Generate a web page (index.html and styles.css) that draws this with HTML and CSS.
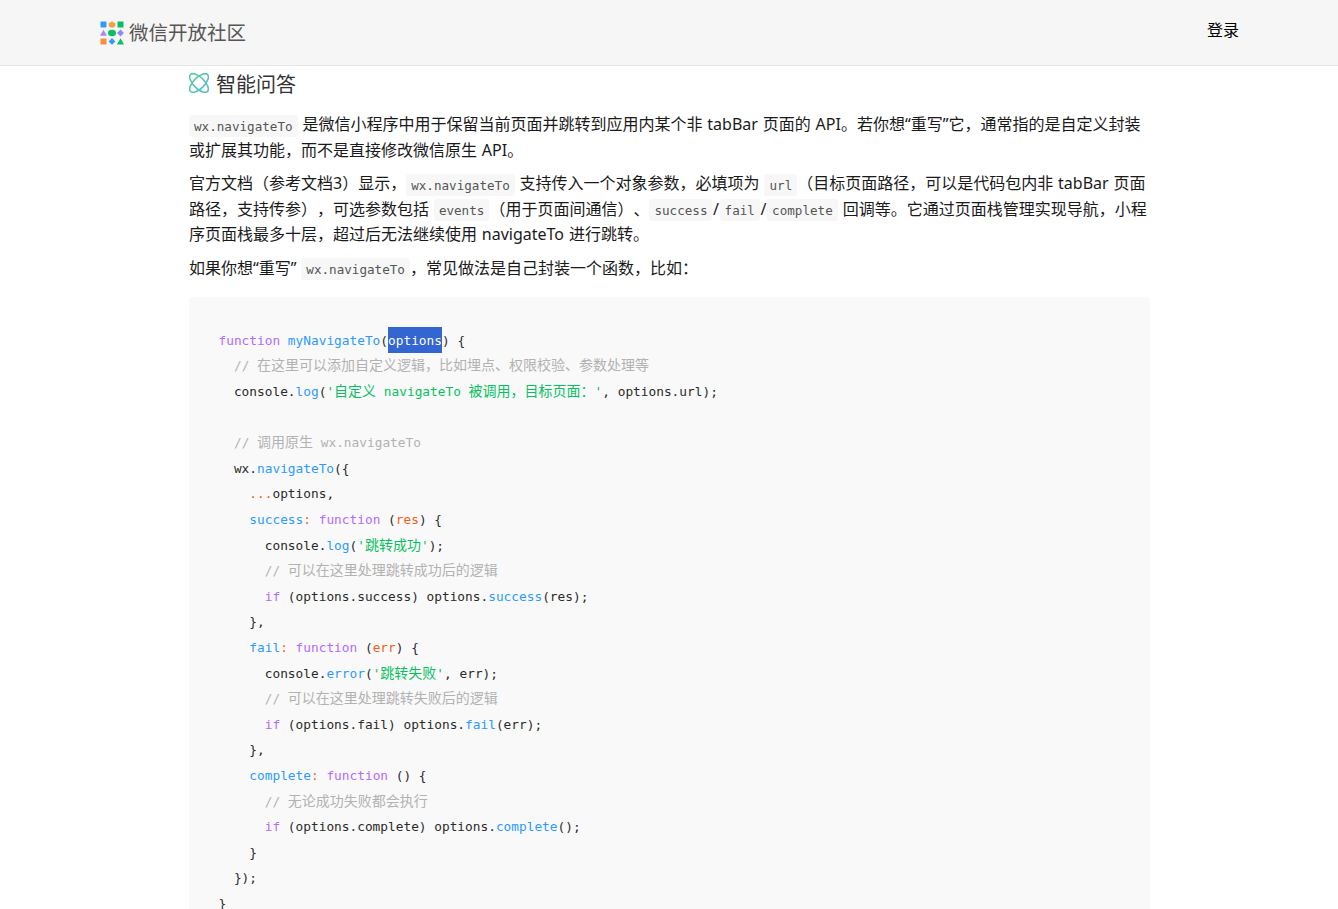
FILE: index.html
```html
<!DOCTYPE html>
<html lang="zh-CN">
<head>
<meta charset="utf-8">
<title>微信开放社区</title>
<link rel="stylesheet" href="styles.css">
</head>
<body>
<header class="topbar">
  <a class="brand">
    <svg class="brand-logo" viewBox="0 0 24 24" width="24" height="24">
      <rect x="0.5" y="0.5" width="6" height="6" rx="1" fill="#2e9bff"/>
      <path d="M12 0l1.600 1.700h1.700v3.300l-1.700 1.600h-3.200L8.700 5V1.700h1.700z" fill="#fa9d3b"/>
      <rect x="17.500" y="0.500" width="6" height="6" fill="#07c160"/>
      <path d="M3.500 8.700l3.500 6H0z" fill="#a08bfa"/>
      <ellipse cx="12" cy="12" rx="4" ry="3.200" fill="#07c160"/>
      <path d="M20.500 8.600l3.400 3.400-3.400 3.400-3.400-3.400z" fill="#8f86fb"/>
      <rect x="0.500" y="17.500" width="6" height="6" fill="#fa8c3c"/>
      <path d="M12 17l3.400 3.400-3.400 3.400-3.400-3.400z" fill="#2e9bff"/>
      <path d="M20.500 17.200l3.500 6.300h-7z" fill="#07c160"/>
    </svg>
    <span class="brand-name">微信开放社区</span>
  </a>
  <a class="login">登录</a>
</header>
<main class="answer">
  <h2 class="answer-title">
    <svg class="answer-icon" viewBox="0 0 20 20" width="20" height="20">
      <defs>
        <linearGradient id="orbit" x1="0" y1="0" x2="1" y2="1">
          <stop offset="0" stop-color="#5fd08f"/>
          <stop offset="1" stop-color="#55b8d8"/>
        </linearGradient>
      </defs>
      <g fill="none" stroke="url(#orbit)" stroke-width="1.600">
        <ellipse cx="10" cy="10" rx="12" ry="5.500" transform="rotate(45 10 10)"/>
        <ellipse cx="10" cy="10" rx="12" ry="5.500" transform="rotate(-45 10 10)"/>
      </g>
    </svg>
    <span>智能问答</span>
  </h2>
  <p class="para"><code class="inline">wx.navigateTo</code> 是微信小程序中用于保留当前页面并跳转到应用内某个非 tabBar 页面的 API。若你想“重写”它，通常指的是自定义封装或扩展其功能，而不是直接修改微信原生 API。</p>
  <p class="para">官方文档（参考文档3）显示，<code class="inline">wx.navigateTo</code> 支持传入一个对象参数，必填项为 <code class="inline">url</code>（目标页面路径，可以是代码包内非 tabBar 页面路径，支持传参），可选参数包括 <code class="inline">events</code>（用于页面间通信）、<code class="inline">success</code><span class="slash">/</span><code class="inline">fail</code><span class="slash">/</span><code class="inline">complete</code> 回调等。它通过页面栈管理实现导航，小程序页面栈最多十层，超过后无法继续使用 navigateTo 进行跳转。</p>
  <p class="para">如果你想“重写” <code class="inline">wx.navigateTo</code>，常见做法是自己封装一个函数，比如：</p>
  <pre class="codeblock"><code><span class="k">function</span> <span class="f">myNavigateTo</span>(<span class="sel">options</span>) {
  <span class="c">// <span class="z">在这里可以添加自定义逻辑，比如埋点、权限校验、参数处理等</span></span>
  console.<span class="f">log</span>(<span class="s">'<span class="z">自定义</span> navigateTo <span class="z">被调用，目标页面：</span>'</span>, options.url);

  <span class="c">// <span class="z">调用原生</span> wx.navigateTo</span>
  wx.<span class="f">navigateTo</span>({
    <span class="o">...</span>options,
    <span class="f">success</span><span class="o">:</span> <span class="k">function</span> (<span class="o">res</span>) {
      console.<span class="f">log</span>(<span class="s">'<span class="z">跳转成功</span>'</span>);
      <span class="c">// <span class="z">可以在这里处理跳转成功后的逻辑</span></span>
      <span class="k">if</span> (options.success) options.<span class="f">success</span>(res);
    },
    <span class="f">fail</span><span class="o">:</span> <span class="k">function</span> (<span class="o">err</span>) {
      console.<span class="f">error</span>(<span class="s">'<span class="z">跳转失败</span>'</span>, err);
      <span class="c">// <span class="z">可以在这里处理跳转失败后的逻辑</span></span>
      <span class="k">if</span> (options.fail) options.<span class="f">fail</span>(err);
    },
    <span class="f">complete</span><span class="o">:</span> <span class="k">function</span> () {
      <span class="c">// <span class="z">无论成功失败都会执行</span></span>
      <span class="k">if</span> (options.complete) options.<span class="f">complete</span>();
    }
  });
}</code></pre>
</main>
</body>
</html>
```
FILE: styles.css
```css
* { box-sizing: border-box; }
html, body {
  margin: 0;
  height: 100%;
  overflow: hidden;
  background: #fff;
}
body {
  font-family: "Noto Sans", "Noto Sans CJK SC", sans-serif;
  font-size: 16px;
  color: #1a1a1a;
  text-spacing-trim: space-all;
}
.topbar {
  display: flex;
  align-items: center;
  justify-content: space-between;
  height: 66px;
  padding: 0 99px 0 100px;
  background: #f6f6f6;
  border-bottom: 1px solid #e6e6e6;
}
.brand {
  display: flex;
  align-items: center;
  gap: 5px;
}
.brand-logo { display: block; }
.brand-name {
  font-size: 19.500px;
  color: #555;
  line-height: 1;
}
.login {
  font-size: 16px;
  color: #000;
  margin-bottom: 7px;
}
.answer {
  margin: 0 188px 0 189px;
}
.answer-title {
  display: flex;
  align-items: center;
  gap: 7px;
  height: 34px;
  margin: 0 0 12px;
  font-size: 20px;
  font-weight: 400;
  color: #333;
}
.answer-icon { display: block; }
.para {
  margin: 0 0 8px;
  line-height: 25.600px;
  word-spacing: 0.700px;
}
.inline {
  padding: 3.500px 5px;
  background: #f7f7f7;
  border-radius: 3px;
  font-family: "DejaVu Sans Mono", monospace;
  font-size: 12.600px;
  line-height: 1;
  color: #555;
}
.slash { padding: 0 0.600px; }
.codeblock {
  margin: 15px 0 0;
  padding: 31.300px 30px 30px 29.500px;
  background: #f9f9f9;
  border-radius: 3px;
  font-family: "DejaVu Sans Mono", monospace;
  font-size: 12.800px;
  line-height: 25.600px;
  color: #2a2a2a;
}
.codeblock code { font: inherit; }
.z {
  font-family: "Noto Sans CJK SC", sans-serif;
  font-size: 14px;
  line-height: 1;
}
.k { color: #b36bff; }
.f { color: #2b9bff; }
.s { color: #07c160; }
.c { color: #b2b2b2; }
.o { color: #fa5a1e; }
.sel {
  display: inline-block;
  background: #3366d0;
  box-shadow: 0 -1px 0 #3366d0;
  color: #fff;
}
```
